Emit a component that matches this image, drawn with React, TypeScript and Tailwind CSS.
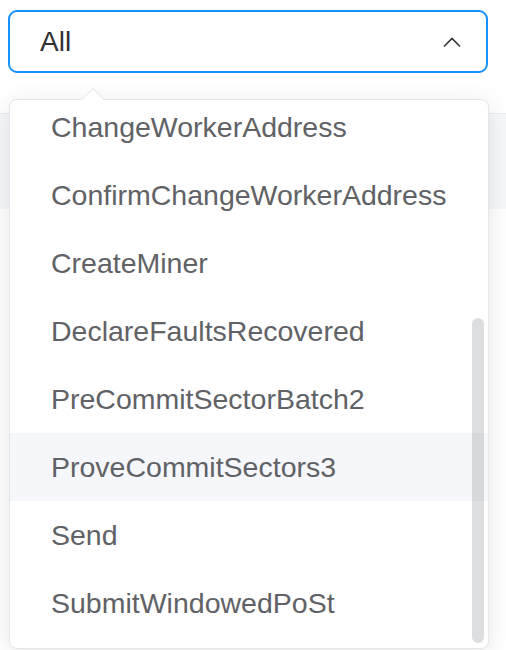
const options = [
  "ChangeWorkerAddress",
  "ConfirmChangeWorkerAddress",
  "CreateMiner",
  "DeclareFaultsRecovered",
  "PreCommitSectorBatch2",
  "ProveCommitSectors3",
  "Send",
  "SubmitWindowedPoSt",
];

const hovered = "ProveCommitSectors3";

export default function App() {
  return (
    <div className="relative h-[650px] overflow-hidden bg-white font-['Liberation_Sans',Arial,sans-serif]">
      <div className="px-[8px] pt-[10px]">
        <div className="flex h-[63px] w-[480px] items-center justify-between rounded-[9px] border-2 border-[#1890ff] pl-[30px] pr-[24px]">
          <span className="text-[28px] text-[#303133]">All</span>
          <svg width="20" height="12" viewBox="0 0 20 12" fill="none">
            <path d="M2 10.5 L10 2.5 L18 10.5" stroke="#333" strokeWidth="1.6" />
          </svg>
        </div>
      </div>

      {/* table header behind the dropdown */}
      <div className="mt-[40px] h-[96px] border-t border-[#e8ecf5] bg-[#f6f7f9]" />

      <div className="absolute left-[9px] top-[99px] h-[550px] w-[480px] rounded-[8px] border border-[#e4e7ed] bg-white shadow-[0_4px_24px_rgba(0,0,0,0.1)]">
        <div className="absolute left-[75px] top-[-9px] h-[16px] w-[16px] rotate-45 border-l border-t border-[#e4e7ed] bg-white" />
        <div className="relative h-full overflow-hidden rounded-[8px]">
          <ul className="mt-[-7px]">
            {options.map((name) => (
              <li
                key={name}
                className={`h-[68px] pl-[41px] text-[28.5px] leading-[68px] text-[#606266] ${
                  name === hovered ? "bg-[#f5f7fa]" : ""
                }`}
              >
                {name}
              </li>
            ))}
          </ul>
          <div className="absolute right-[4px] top-[218px] h-[325px] w-[12px] rounded-full bg-[#909399]/30" />
        </div>
      </div>
    </div>
  );
}
